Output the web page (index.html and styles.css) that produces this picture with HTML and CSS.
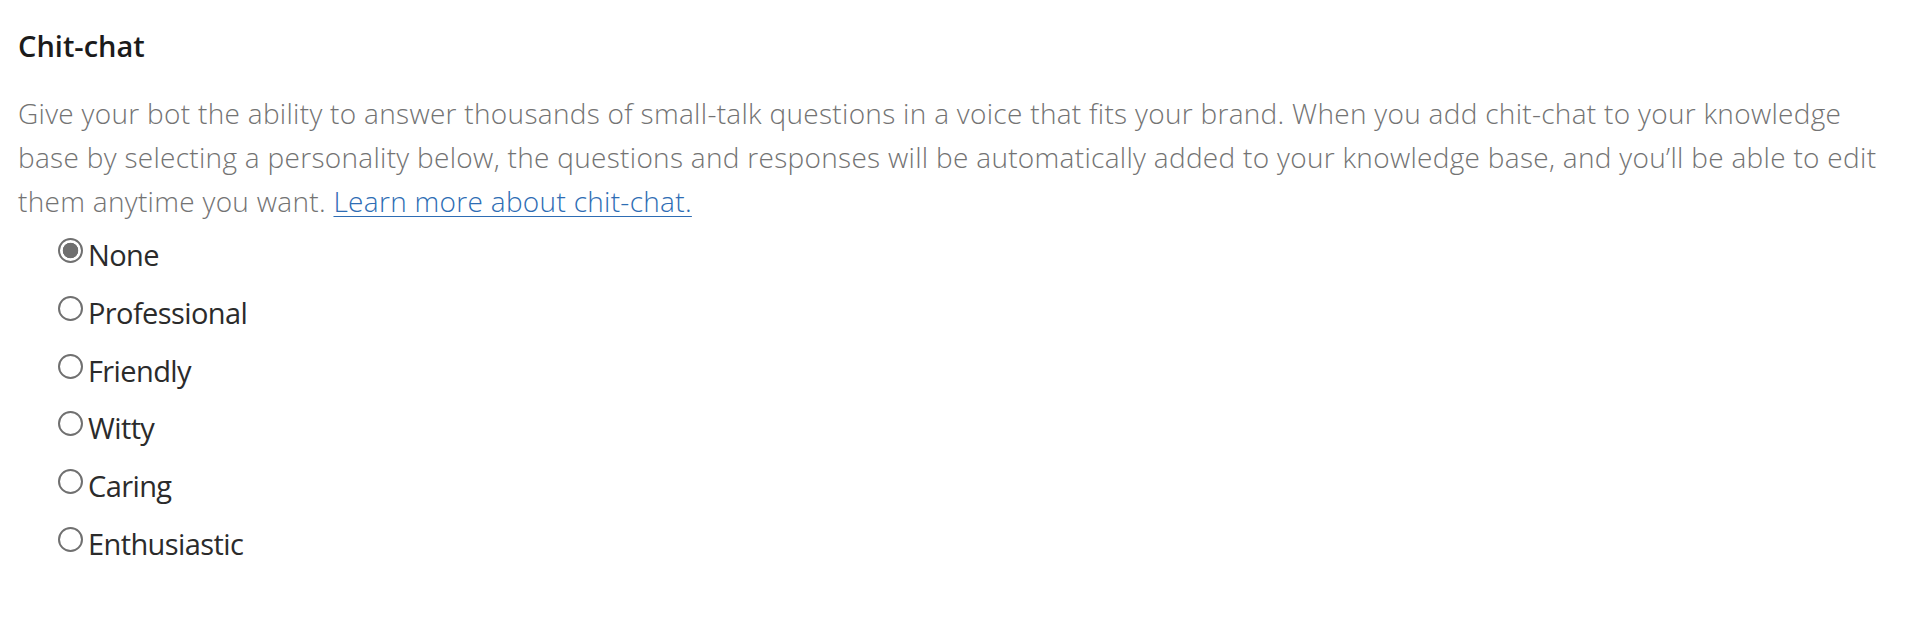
FILE: index.html
```html
<!DOCTYPE html>
<html lang="en">
<head>
<meta charset="utf-8">
<title>Chit-chat</title>
<link rel="stylesheet" href="styles.css">
</head>
<body>
<section class="chitchat">
  <h2 class="title">Chit-chat</h2>
  <p class="desc">Give your bot the ability to answer thousands of small-talk questions in a voice that fits your brand. When you add chit-chat to your knowledge base by selecting a personality below, the questions and responses will be automatically added to your knowledge base, and you’ll be able to edit them anytime you want. <a class="link" href="#">Learn more about chit-chat.</a></p>
  <div class="options">
    <label class="option"><input class="radio" type="radio" name="p" checked><span class="label">None</span></label>
    <label class="option"><input class="radio" type="radio" name="p"><span class="label">Professional</span></label>
    <label class="option"><input class="radio" type="radio" name="p"><span class="label">Friendly</span></label>
    <label class="option"><input class="radio" type="radio" name="p"><span class="label">Witty</span></label>
    <label class="option"><input class="radio" type="radio" name="p"><span class="label">Caring</span></label>
    <label class="option"><input class="radio" type="radio" name="p"><span class="label">Enthusiastic</span></label>
  </div>
</section>
</body>
</html>
```

FILE: styles.css
```css
html, body {
  margin: 0;
  padding: 0;
  background: #ffffff;
}
body {
  font-family: "Open Sans", "Noto Sans", sans-serif;
}
.chitchat {
  padding: 26px 28px 0 18px;
}
.title {
  margin: 0;
  font-size: 29px;
  line-height: 40px;
  font-weight: 600;
  color: #1b1b1b;
}
.desc {
  margin: 25px 0 3px 0;
  font-size: 28px;
  line-height: 44px;
  font-weight: 300;
  color: #737373;
  letter-spacing: 0.3px;
}
.link {
  color: #2e6db4;
  text-decoration: underline;
  text-underline-offset: 4px;
  text-decoration-thickness: 1px;
}
.options {
  display: flex;
  flex-direction: column;
  padding-left: 40px;
}
.option {
  display: flex;
  align-items: flex-start;
  height: 57.8px;
  gap: 5px;
}
.radio {
  appearance: none;
  -webkit-appearance: none;
  margin: 12px 0 0 0;
  width: 25px;
  height: 25px;
  border: 2px solid #707070;
  border-radius: 50%;
  box-sizing: border-box;
  background: #fff;
  flex: none;
}
.radio:checked {
  background: radial-gradient(circle, #6f6f6f 0 7.5px, #fff 8.1px);
}
.label {
  font-size: 29px;
  line-height: 58px;
  color: #2b2b2b;
  letter-spacing: -0.6px;
}
```
